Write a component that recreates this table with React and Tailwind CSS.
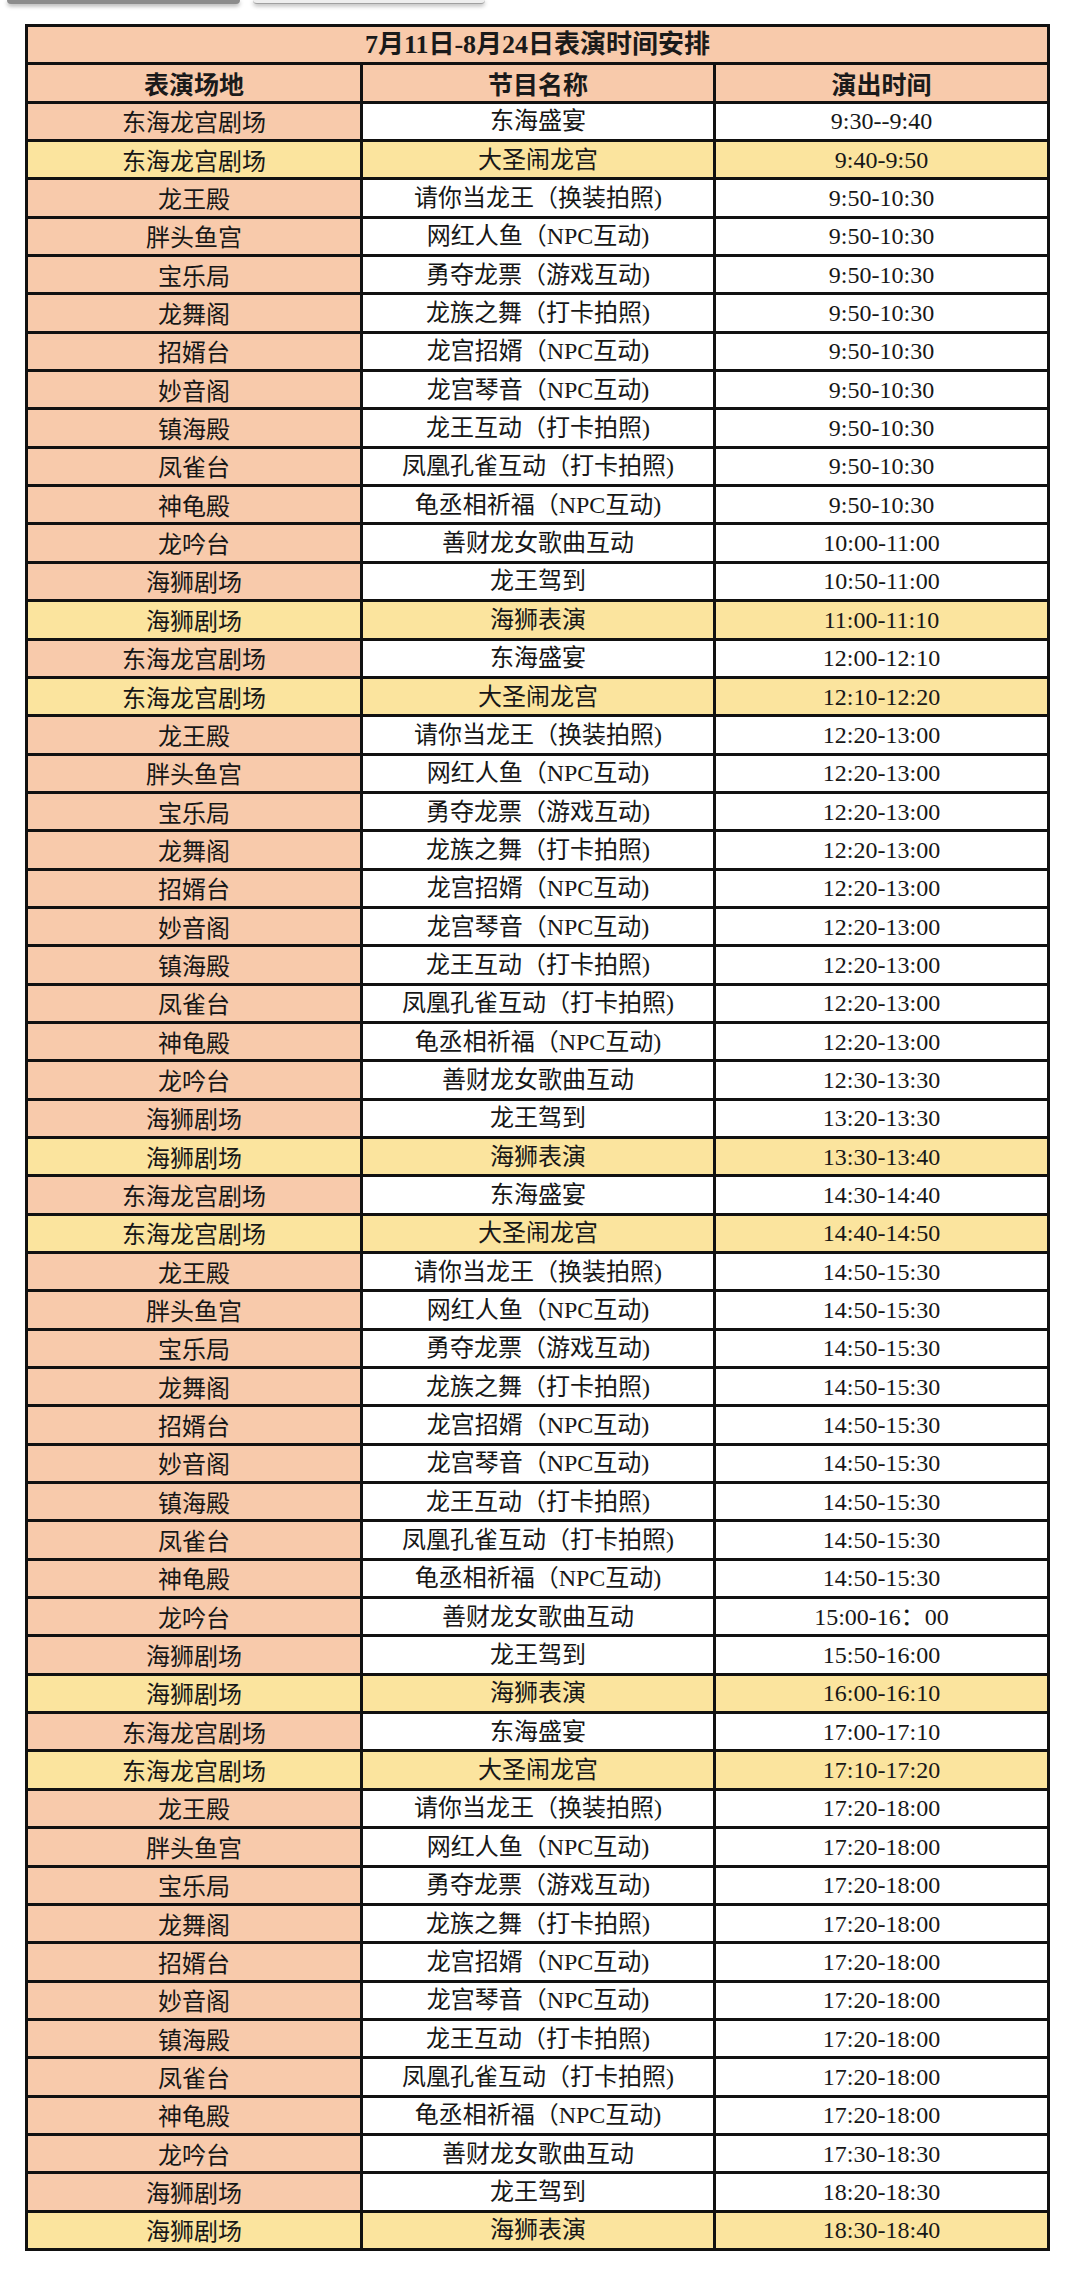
import React from "react";

const blocks = [
  ["9:30--9:40", "9:40-9:50", "9:50-10:30", "10:00-11:00", "10:50-11:00", "11:00-11:10"],
  ["12:00-12:10", "12:10-12:20", "12:20-13:00", "12:30-13:30", "13:20-13:30", "13:30-13:40"],
  ["14:30-14:40", "14:40-14:50", "14:50-15:30", "15:00-16：00", "15:50-16:00", "16:00-16:10"],
  ["17:00-17:10", "17:10-17:20", "17:20-18:00", "17:30-18:30", "18:20-18:30", "18:30-18:40"],
];

const mids = [
  ["龙王殿", "请你当龙王（换装拍照)"],
  ["胖头鱼宫", "网红人鱼（NPC互动)"],
  ["宝乐局", "勇夺龙票（游戏互动)"],
  ["龙舞阁", "龙族之舞（打卡拍照)"],
  ["招婿台", "龙宫招婿（NPC互动)"],
  ["妙音阁", "龙宫琴音（NPC互动)"],
  ["镇海殿", "龙王互动（打卡拍照)"],
  ["凤雀台", "凤凰孔雀互动（打卡拍照)"],
  ["神龟殿", "龟丞相祈福（NPC互动)"],
];

const rows = [];
blocks.forEach((t) => {
  rows.push({ place: "东海龙宫剧场", show: "东海盛宴", time: t[0], y: false });
  rows.push({ place: "东海龙宫剧场", show: "大圣闹龙宫", time: t[1], y: true });
  mids.forEach(([p, s]) => rows.push({ place: p, show: s, time: t[2], y: false }));
  rows.push({ place: "龙吟台", show: "善财龙女歌曲互动", time: t[3], y: false });
  rows.push({ place: "海狮剧场", show: "龙王驾到", time: t[4], y: false });
  rows.push({ place: "海狮剧场", show: "海狮表演", time: t[5], y: true });
});

function Row({ r }) {
  const left = r.y ? "bg-[#fbe49e]" : "bg-[#f8caab]";
  const rest = r.y ? "bg-[#fbe49e]" : "bg-white";
  return (
    <div className="flex h-[38.35px] border-b-[3px] border-[#111]">
      <div className={`w-[335px] shrink-0 border-r-[3px] border-[#111] flex items-center justify-center text-[24px] leading-none text-[#171717] font-['Noto_Sans_CJK_SC',sans-serif] ${left}`}>
        {r.place}
      </div>
      <div className={`w-[353px] shrink-0 border-r-[3px] border-[#111] flex items-center justify-center text-[24px] leading-none text-[#171717] font-['Liberation_Serif','Noto_Sans_CJK_SC',serif] ${rest}`}>
        {r.show}
      </div>
      <div className={`flex-1 flex items-center justify-center text-[24px] leading-none text-[#171717] font-['Liberation_Serif','Noto_Sans_CJK_SC',serif] ${rest}`}>
        {r.time}
      </div>
    </div>
  );
}

export default function App() {
  return (
    <div className="bg-white w-[1088px] min-h-[2281px]">
      <div className="flex h-[5px] gap-[13px] pl-[7px]">
        <div className="w-[233px] h-[4px] rounded-b-[4px] bg-[#8c8c8c] shadow-[0_2px_4px_rgba(0,0,0,0.35)]" />
        <div className="w-[232px] h-[4px] rounded-b-[4px] bg-[#eeeeee] border-b border-[#a0a0a0] shadow-[0_2px_4px_rgba(0,0,0,0.3)]" />
      </div>
      <div className="ml-[25px] mt-[19px] w-[1025px] border-x-[3px] border-t-[3px] border-[#111]">
        <div className="flex h-[38.35px] border-b-[3px] border-[#111] bg-[#f8caab] items-center justify-center text-[26px] leading-none font-bold text-[#1a1a1a] font-['Liberation_Serif','Noto_Sans_CJK_SC',serif]">
          7月11日-8月24日表演时间安排
        </div>
        <div className="flex h-[38.35px] border-b-[3px] border-[#111] bg-[#f8caab] text-[25px] leading-none font-bold text-[#1a1a1a] font-['Noto_Sans_CJK_SC',sans-serif]">
          <div className="w-[335px] shrink-0 border-r-[3px] border-[#111] flex items-center justify-center">表演场地</div>
          <div className="w-[353px] shrink-0 border-r-[3px] border-[#111] flex items-center justify-center">节目名称</div>
          <div className="flex-1 flex items-center justify-center">演出时间</div>
        </div>
        {rows.map((r, i) => (
          <Row key={i} r={r} />
        ))}
      </div>
    </div>
  );
}
